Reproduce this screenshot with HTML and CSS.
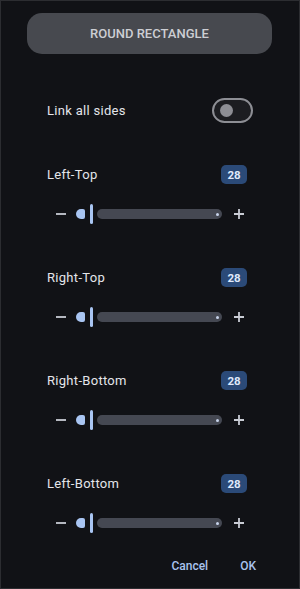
FILE: index.html
```html
<!DOCTYPE html>
<html lang="en">
<head>
    <meta charset="UTF-8">
    <meta name="viewport" content="width=device-width, initial-scale=1.0">
    <title>Round Rectangle</title>
    <link rel="stylesheet" href="styles.css">
</head>
<body>
    <main class="dialog">
        <div class="title-btn">ROUND RECTANGLE</div>

        <section class="link-row">
            <span class="label">Link all sides</span>
            <span class="toggle"><span class="knob"></span></span>
        </section>

        <section class="corner">
            <div class="corner-head">
                <span class="label">Left-Top</span>
                <span class="badge">28</span>
            </div>
            <div class="slider">
                <svg class="step" width="12" height="12" viewBox="0 0 12 12"><path d="M1 6h10" stroke="#c9ccd4" stroke-width="1.8"/></svg>
                <span class="active"></span>
                <span class="thumb"></span>
                <span class="track"><span class="dot"></span></span>
                <svg class="step" width="12" height="12" viewBox="0 0 12 12"><path d="M1 6h10M6 1v10" stroke="#c9ccd4" stroke-width="1.8"/></svg>
            </div>
        </section>

        <section class="corner">
            <div class="corner-head">
                <span class="label">Right-Top</span>
                <span class="badge">28</span>
            </div>
            <div class="slider">
                <svg class="step" width="12" height="12" viewBox="0 0 12 12"><path d="M1 6h10" stroke="#c9ccd4" stroke-width="1.8"/></svg>
                <span class="active"></span>
                <span class="thumb"></span>
                <span class="track"><span class="dot"></span></span>
                <svg class="step" width="12" height="12" viewBox="0 0 12 12"><path d="M1 6h10M6 1v10" stroke="#c9ccd4" stroke-width="1.8"/></svg>
            </div>
        </section>

        <section class="corner">
            <div class="corner-head">
                <span class="label">Right-Bottom</span>
                <span class="badge">28</span>
            </div>
            <div class="slider">
                <svg class="step" width="12" height="12" viewBox="0 0 12 12"><path d="M1 6h10" stroke="#c9ccd4" stroke-width="1.8"/></svg>
                <span class="active"></span>
                <span class="thumb"></span>
                <span class="track"><span class="dot"></span></span>
                <svg class="step" width="12" height="12" viewBox="0 0 12 12"><path d="M1 6h10M6 1v10" stroke="#c9ccd4" stroke-width="1.8"/></svg>
            </div>
        </section>

        <section class="corner">
            <div class="corner-head">
                <span class="label">Left-Bottom</span>
                <span class="badge">28</span>
            </div>
            <div class="slider">
                <svg class="step" width="12" height="12" viewBox="0 0 12 12"><path d="M1 6h10" stroke="#c9ccd4" stroke-width="1.8"/></svg>
                <span class="active"></span>
                <span class="thumb"></span>
                <span class="track"><span class="dot"></span></span>
                <svg class="step" width="12" height="12" viewBox="0 0 12 12"><path d="M1 6h10M6 1v10" stroke="#c9ccd4" stroke-width="1.8"/></svg>
            </div>
        </section>

        <footer class="actions">
            <button class="text-btn">Cancel</button>
            <button class="text-btn">OK</button>
        </footer>
    </main>
</body>
</html>
```

FILE: styles.css
```css
html, body {
    margin: 0;
    padding: 0;
    background: #111216;
    font-family: Roboto, "Noto Sans", Arial, sans-serif;
    color: #e2e3e8;
}
body {
    width: 300px;
    height: 589px;
    box-sizing: border-box;
    border: 1px solid #2c2d31;
    overflow: hidden;
}
.dialog {
    padding: 12px 27px 0 26px;
    display: flex;
    flex-direction: column;
}
.title-btn {
    height: 41px;
    border-radius: 15px;
    background: #47494f;
    color: #cdced3;
    font-size: 13px;
    font-weight: 500;
    display: flex;
    align-items: center;
    justify-content: center;
}
.label {
    font-size: 13px;
    letter-spacing: 0.3px;
    color: #e4e5ea;
}
.link-row {
    margin-top: 44px;
    height: 25px;
    padding: 0 19px 0 20px;
    display: flex;
    align-items: center;
    justify-content: space-between;
}
.toggle {
    width: 41px;
    height: 25px;
    box-sizing: border-box;
    border: 2px solid #8d8e94;
    border-radius: 13px;
    background: #1c1d21;
    display: flex;
    align-items: center;
    padding-left: 6px;
}
.knob {
    width: 13px;
    height: 13px;
    border-radius: 50%;
    background: #8d8e94;
}
.corner {
    margin-top: 42px;
}
.corner + .corner {
    margin-top: 44px;
}
.corner-head {
    height: 19px;
    padding: 0 25px 0 20px;
    display: flex;
    align-items: center;
    justify-content: space-between;
}
.badge {
    width: 26px;
    height: 19px;
    border-radius: 5px;
    background: #2b4a78;
    color: #dfe8fb;
    font-size: 11.5px;
    font-weight: 700;
    display: flex;
    align-items: center;
    justify-content: center;
}
.slider {
    margin-top: 20px;
    height: 20px;
    padding: 0 27px 0 28px;
    display: flex;
    align-items: center;
}
.step {
    flex: none;
}
.active {
    width: 9px;
    height: 10px;
    margin-left: 9px;
    border-radius: 5px 2px 2px 5px;
    background: #a9c5f2;
}
.thumb {
    width: 3px;
    height: 20px;
    margin-left: 5px;
    border-radius: 2px;
    background: #a9c5f2;
}
.track {
    flex: 1;
    height: 10px;
    margin: 0 11px 0 4px;
    border-radius: 5px;
    background: #454852;
    display: flex;
    align-items: center;
    justify-content: flex-end;
    padding-right: 3px;
}
.dot {
    width: 3px;
    height: 3px;
    border-radius: 50%;
    background: #c7d3ea;
}
.actions {
    margin-top: 26px;
    padding-right: 16px;
    display: flex;
    justify-content: flex-end;
    gap: 32px;
}
.text-btn {
    background: none;
    border: none;
    padding: 0;
    font-family: inherit;
    font-size: 12px;
    font-weight: 500;
    color: #a9c3ee;
    cursor: pointer;
}
```
